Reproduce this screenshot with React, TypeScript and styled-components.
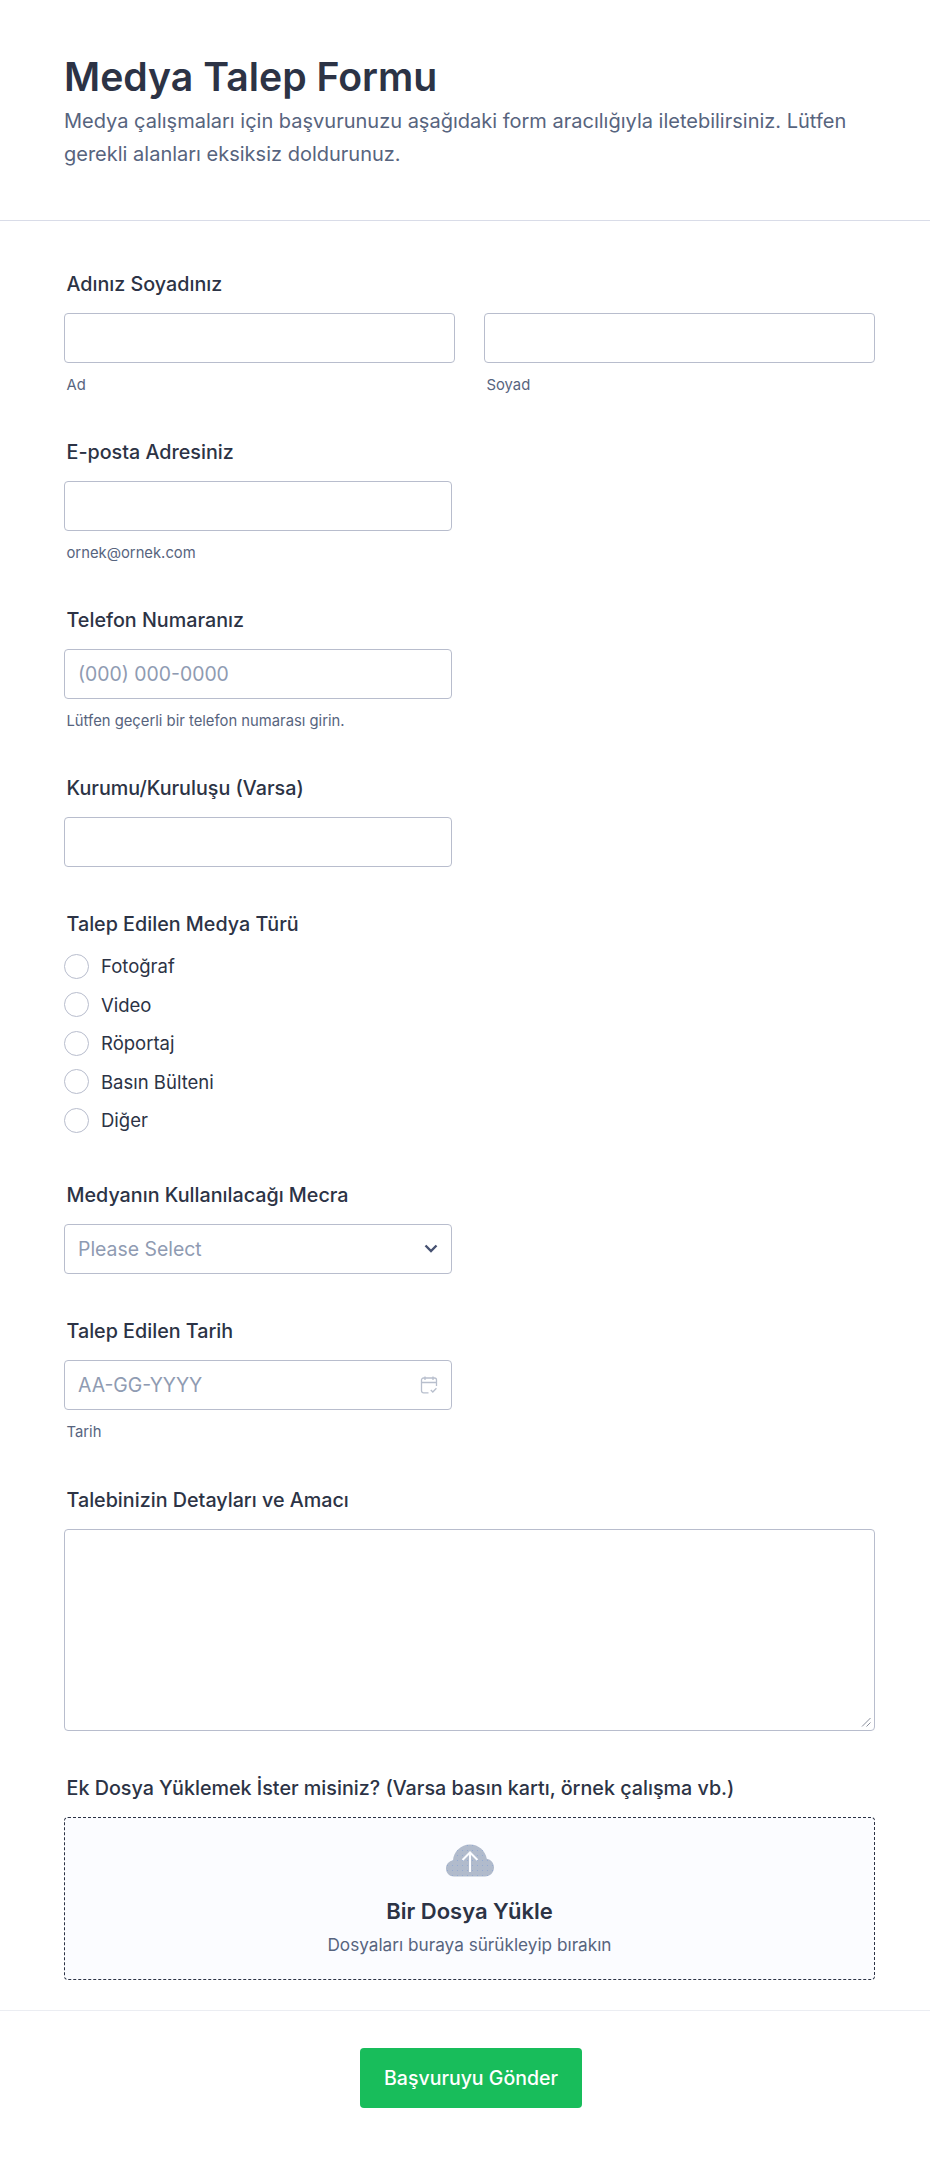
import styled, {createGlobalStyle} from "styled-components";

const GlobalStyle = createGlobalStyle`
    html, body {
        margin: 0;
        padding: 0;
        background: #fff;
    }
    * {
        box-sizing: border-box;
    }
    body {
        font-family: 'Inter', 'Liberation Sans', sans-serif;
        color: #2c3345;
    }
`

const Page = styled.div`
    width: 930px;
    height: 2157px;
    overflow: hidden;
`

const Header = styled.header`
    height: 221px;
    padding: 53px 64px 0;
    border-bottom: 1px solid #d9dce8;
`

const Title = styled.h1`
    margin: 0;
    font-size: 39.2px;
    line-height: 48px;
    font-weight: 600;
    color: #2c3345;
`

const Description = styled.p`
    margin: 4px 0 0;
    font-size: 20px;
    line-height: 33px;
    color: #57647e;
`

const Body = styled.main`
    padding: 51px 55px 0 64px;
    display: flex;
    flex-direction: column;
`

const Field = styled.section<{$after?: number}>`
    margin-bottom: ${p => p.$after ?? 46}px;
`

const Label = styled.div<{$gap?: number}>`
    font-size: 19.73px;
    line-height: 24px;
    font-weight: 450;
    color: #2c3345;
    padding-left: 2.5px;
    margin-bottom: ${p => p.$gap ?? 17}px;
`

const Row = styled.div`
    display: grid;
    grid-template-columns: 391px 391px;
    gap: 29px;
`

const InputBox = styled.div<{$wide?: boolean}>`
    width: ${p => p.$wide ? '100%' : '388px'};
    height: 50px;
    border: 1px solid #b8bdcd;
    border-radius: 4px;
    background: #fff;
    padding: 0 13px;
    display: flex;
    align-items: center;
    justify-content: space-between;
`

const Placeholder = styled.span`
    font-size: 19.4px;
    color: #8f9bb2;
`

const SubLabel = styled.div`
    margin-top: 13px;
    padding-left: 2.5px;
    font-size: 14.8px;
    line-height: 18px;
    color: #57647e;
`

const RadioList = styled.div`
    display: flex;
    flex-direction: column;
    gap: 14px;
`

const RadioRow = styled.label`
    display: flex;
    align-items: center;
    gap: 12px;
    height: 24.5px;
    font-size: 18.5px;
    color: #2c3345;
`

const RadioDot = styled.span`
    width: 25px;
    height: 25px;
    border-radius: 50%;
    border: 1px solid #b8bdcd;
    background: #fff;
    flex: none;
`

const TextArea = styled.div`
    position: relative;
    height: 202px;
    border: 1px solid #b8bdcd;
    border-radius: 4px;
`

const ResizeGrip = styled.svg`
    position: absolute;
    right: 3px;
    bottom: 3px;
`

const UploadBox = styled.div`
    height: 163px;
    border: 1px dashed #2c3345;
    border-radius: 4px;
    background: #fbfcff;
    display: flex;
    flex-direction: column;
    align-items: center;
    padding-top: 26px;
`

const UploadTitle = styled.div`
    margin-top: 18px;
    font-size: 22px;
    line-height: 32px;
    font-weight: 600;
    color: #2c3345;
`

const UploadHint = styled.div`
    margin-top: 6px;
    font-size: 17.2px;
    line-height: 24px;
    color: #57647e;
`

const Footer = styled.footer`
    border-top: 1px solid #ebedf2;
    margin-top: 30px;
    padding: 37px 0 0 12px;
    display: flex;
    justify-content: center;
`

const SubmitButton = styled.button`
    width: 222px;
    height: 60px;
    border: none;
    border-radius: 4px;
    background: #18bd5b;
    color: #fff;
    font-family: inherit;
    font-size: 19.5px;
    font-weight: 500;
`

const mediaTypes = ["Fotoğraf", "Video", "Röportaj", "Basın Bülteni", "Diğer"]

const Chevron = () => (
    <svg width="14" height="9" viewBox="0 0 14 9" fill="none">
        <path d="M1.500 1.500 7 7l5.500-5.500" stroke="#475272" strokeWidth="2.400"/>
    </svg>
)

const CalendarIcon = () => (
    <svg width="18" height="18" viewBox="0 0 18 18" fill="none" stroke="#b8bfcd" strokeWidth="1.300">
        <path d="M8.500 16.800H3.500a2 2 0 0 1-2-2V4a2 2 0 0 1 2-2h11a2 2 0 0 1 2 2v6"/>
        <path d="M1.500 6.500h15M5 .5v3.500M13 .5v3.500"/>
        <path d="M10.800 14l2 2 3.600-3.800"/>
    </svg>
)

const cloudPath = "M8 32.500C3.500 32.500 0 29 0 24.500 0 20.300 3 17 7 16.500 7.500 7.500 15 .5 24 .5c8.500 0 15.500 6.200 16.800 14.300 4.200.7 7.200 4.400 7.200 8.700 0 5-4 9-9 9z"

const CloudIcon = () => (
    <svg width="48" height="33" viewBox="0 0 48 33">
        <defs>
            <pattern id="cloud-dots" width="5" height="5" patternUnits="userSpaceOnUse">
                <circle cx="1.500" cy="1.500" r=".6" fill="#8fa6d0"/>
            </pattern>
        </defs>
        <path d={cloudPath} fill="#b1bbcc"/>
        <path d={cloudPath} fill="url(#cloud-dots)"/>
        <path d="M24 28V9M16.500 16 24 8.500 31.500 16" fill="none" stroke="#fbfcff" strokeWidth="2"/>
    </svg>
)

export default function App() {
    return (
        <>
            <GlobalStyle/>
            <Page>
                <Header>
                    <Title>Medya Talep Formu</Title>
                    <Description>
                        Medya çalışmaları için başvurunuzu aşağıdaki form aracılığıyla iletebilirsiniz. Lütfen gerekli alanları eksiksiz doldurunuz.
                    </Description>
                </Header>
                <Body>
                    <Field>
                        <Label>Adınız Soyadınız</Label>
                        <Row>
                            <div>
                                <InputBox $wide/>
                                <SubLabel>Ad</SubLabel>
                            </div>
                            <div>
                                <InputBox $wide/>
                                <SubLabel>Soyad</SubLabel>
                            </div>
                        </Row>
                    </Field>
                    <Field>
                        <Label>E-posta Adresiniz</Label>
                        <InputBox/>
                        <SubLabel>ornek@ornek.com</SubLabel>
                    </Field>
                    <Field>
                        <Label>Telefon Numaranız</Label>
                        <InputBox><Placeholder>(000) 000-0000</Placeholder></InputBox>
                        <SubLabel>Lütfen geçerli bir telefon numarası girin.</SubLabel>
                    </Field>
                    <Field $after={45}>
                        <Label>Kurumu/Kuruluşu (Varsa)</Label>
                        <InputBox/>
                    </Field>
                    <Field $after={50}>
                        <Label $gap={18}>Talep Edilen Medya Türü</Label>
                        <RadioList>
                            {mediaTypes.map(item => (
                                <RadioRow key={item}>
                                    <RadioDot/>
                                    {item}
                                </RadioRow>
                            ))}
                        </RadioList>
                    </Field>
                    <Field $after={45}>
                        <Label>Medyanın Kullanılacağı Mecra</Label>
                        <InputBox>
                            <Placeholder>Please Select</Placeholder>
                            <Chevron/>
                        </InputBox>
                    </Field>
                    <Field $after={47}>
                        <Label>Talep Edilen Tarih</Label>
                        <InputBox>
                            <Placeholder>AA-GG-YYYY</Placeholder>
                            <CalendarIcon/>
                        </InputBox>
                        <SubLabel>Tarih</SubLabel>
                    </Field>
                    <Field $after={45}>
                        <Label>Talebinizin Detayları ve Amacı</Label>
                        <TextArea>
                            <ResizeGrip width="10" height="10" viewBox="0 0 10 10" fill="none" stroke="#8a8f9c">
                                <path d="M1 9.500 9.500 1M5.500 9.500 9.500 5.500"/>
                            </ResizeGrip>
                        </TextArea>
                    </Field>
                    <Field $after={0}>
                        <Label>Ek Dosya Yüklemek İster misiniz? (Varsa basın kartı, örnek çalışma vb.)</Label>
                        <UploadBox>
                            <CloudIcon/>
                            <UploadTitle>Bir Dosya Yükle</UploadTitle>
                            <UploadHint>Dosyaları buraya sürükleyip bırakın</UploadHint>
                        </UploadBox>
                    </Field>
                </Body>
                <Footer>
                    <SubmitButton>Başvuruyu Gönder</SubmitButton>
                </Footer>
            </Page>
        </>
    );
}
